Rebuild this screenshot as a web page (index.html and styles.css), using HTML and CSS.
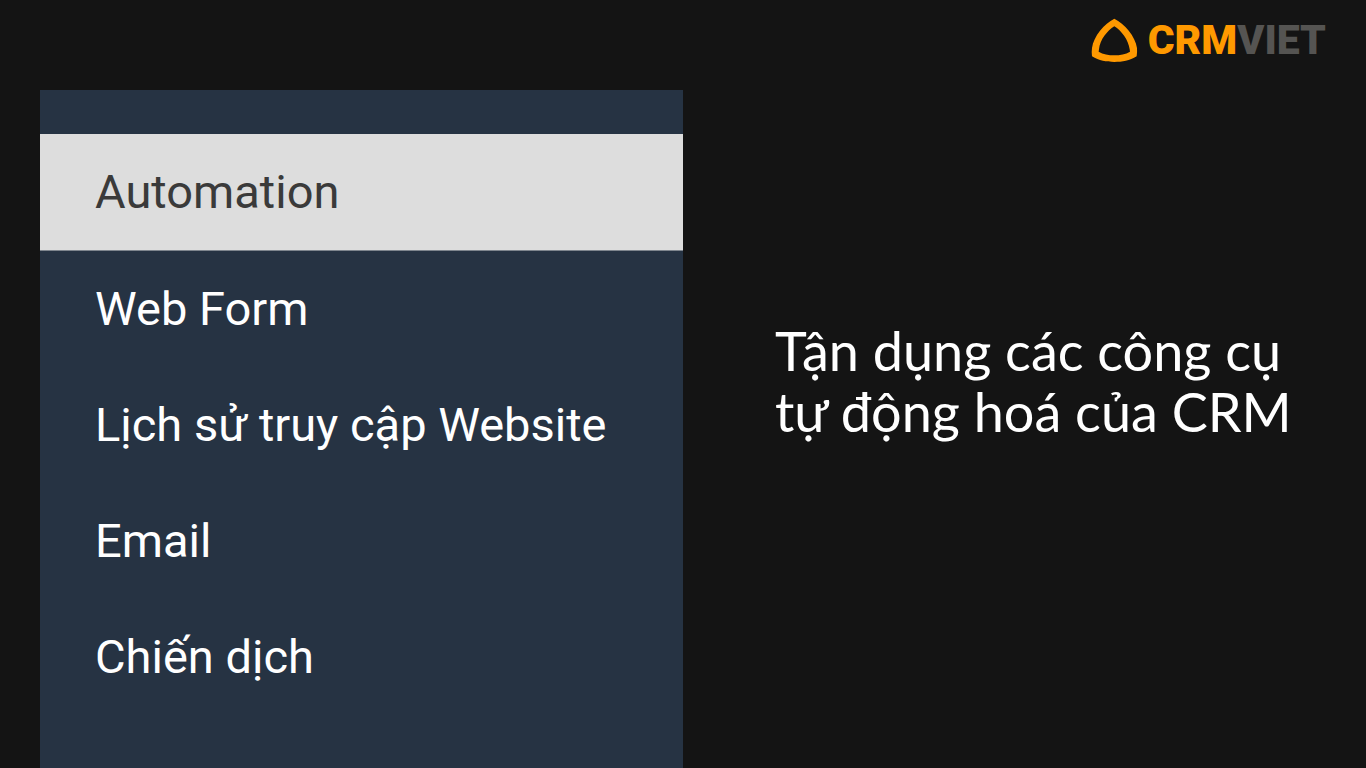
FILE: index.html
```
<!DOCTYPE html>
<html lang="vi">
<head>
  <meta charset="UTF-8">
  <meta name="viewport" content="width=device-width, initial-scale=1">
  <title>CRMVIET</title>
  <link rel="stylesheet" href="styles.css">
</head>
<body>
  <!-- Menu -->
  <nav class="menu">
    <a class="menu-item active" href="#automation" aria-current="page">Automation</a>
    <a class="menu-item" href="#web-form">Web Form</a>
    <a class="menu-item" href="#website">Lịch sử truy cập Website</a>
    <a class="menu-item" href="#email">Email</a>
    <a class="menu-item" href="#campaign">Chiến dịch</a>
  </nav>

  <div class="main">
    <header class="header">
      <a class="logo" href="#">
        <svg class="logo-icon" viewBox="12 12 141 135" aria-hidden="true">
          <path fill="#ff9900" fill-rule="evenodd" d="M82 14C112 29 145 66 150 102Q151 116 149 127C128 140 106 144 82 144C58 144 36 140 15 127Q13 116 15 102C20 66 52 29 82 14ZM82 37C61 50 39 77 36 106L35 113C48 121 65 124 82 124C99 124 116 121 129 113L128 106C124 77 103 50 82 37Z"/>
        </svg>
        <span class="logo-text">CRM<span class="logo-gray">VIET</span></span>
      </a>
    </header>

    <main class="content">
      <h1 class="title">Tận dụng các công cụ<br>tự động hoá của CRM</h1>
    </main>
  </div>
</body>
</html>
```
FILE: styles.css
```
* {
  box-sizing: border-box;
}

body {
  margin: 0;
  min-height: 100vh;
  display: grid;
  grid-template-columns: 1fr 1fr;
  background-color: #141414;
  color: #fff;
  font-family: Roboto, sans-serif;
}

a {
  color: inherit;
  text-decoration: none;
}

/* Menu */
.menu {
  margin: 90px 0 0 40px;
  padding-top: 44px;
  background-color: #263343;
}

.menu-item {
  display: block;
  padding: 0 55px;
  font-size: 47px;
  line-height: 116px;
  white-space: nowrap;
}

.menu-item.active {
  background-color: #ddd;
  border-bottom: 1px solid #7f868e;
  color: #3a3a3a;
}

.main {
  display: flex;
  flex-direction: column;
}

/* Logo */
.header {
  display: flex;
  justify-content: flex-end;
  padding: 18px 40px 0 0;
}

.logo {
  display: flex;
  align-items: center;
  gap: 10px;
}

.logo-icon {
  width: 47px;
  height: 45px;
}

.logo-text {
  color: #ff9900;
  font-size: 41px;
  font-weight: 900;
  line-height: 45px;
}

.logo-gray {
  color: #555452;
}

.content {
  flex: 1;
  display: flex;
  align-items: center;
  padding: 0 0 70px 92px;
}

.title {
  margin: 0;
  font-family: Lato, sans-serif;
  font-size: 54px;
  font-weight: 400;
  line-height: 61px;
  white-space: nowrap;
}
```
